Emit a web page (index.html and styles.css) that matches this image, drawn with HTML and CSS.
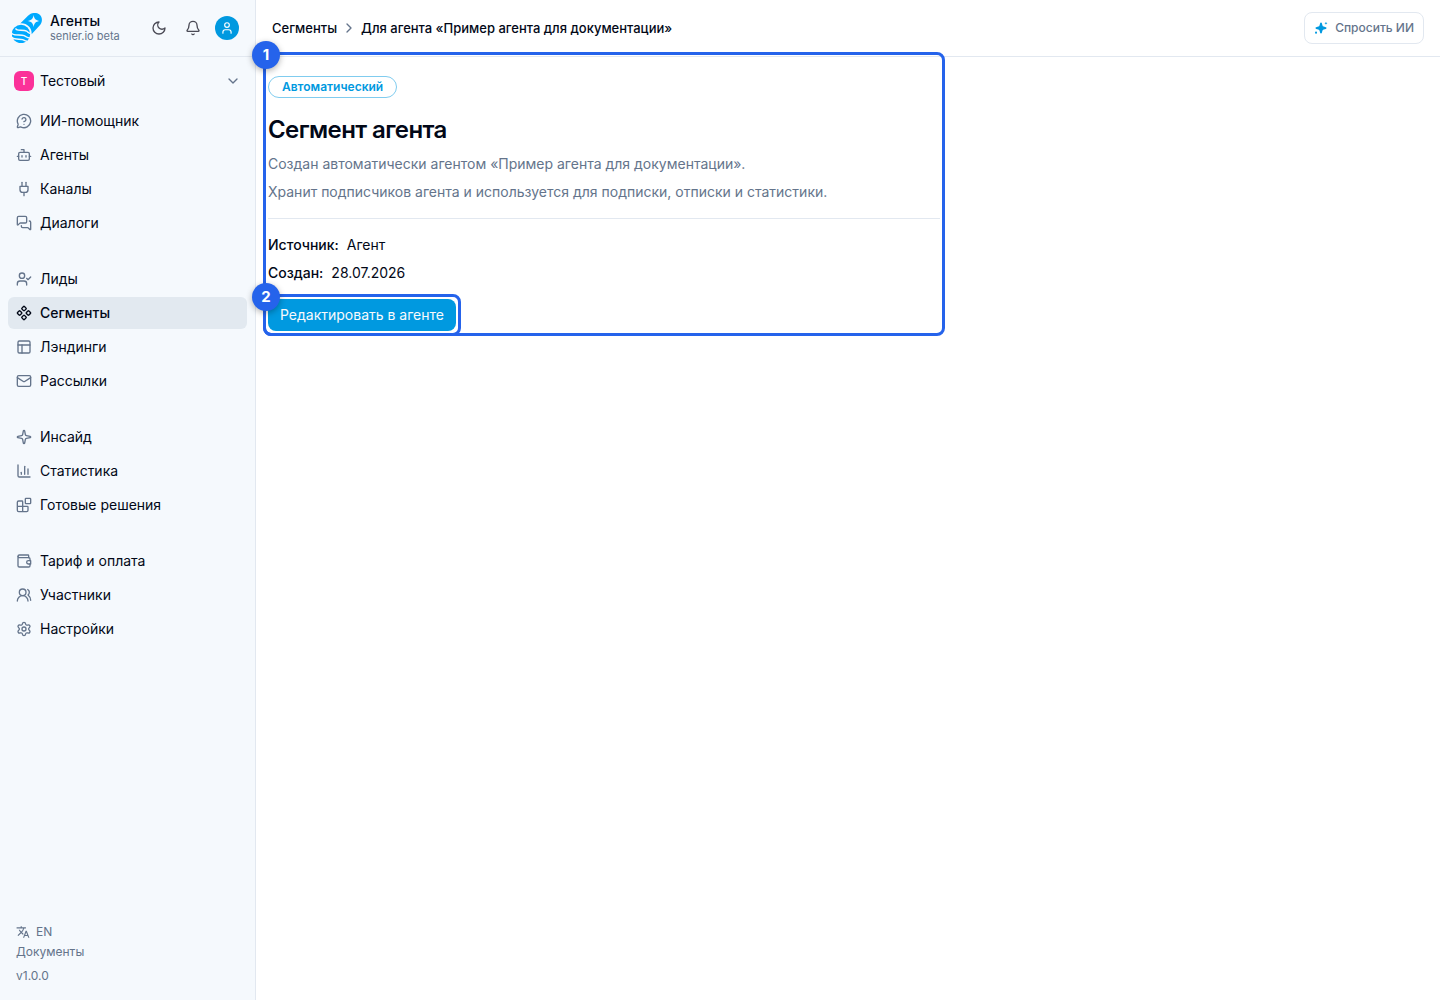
FILE: index.html
```html
<!DOCTYPE html>
<html lang="ru">
<head>
    <meta charset="UTF-8">
    <meta name="viewport" content="width=device-width, initial-scale=1.0">
    <title>Сегмент агента</title>
    <link rel="stylesheet" href="styles.css">
</head>
<body>

<div class="app">
    <aside class="sidebar">
        <div class="brand">
            <svg class="logo" viewBox="0 0 30 30" aria-hidden="true">
                <path fill="#00aaff" d="M8.200 10.400 16 2.700C20-1 25.500-.8 28 2c2.800 3 2.500 7.600-.6 10.800L19.600 21.200c.7-6.200-4.900-11.600-11.400-10.800z"/>
                <path fill="#f5f9fd" d="M21.600 2c.7 4.100 2.100 5.300 6 6-3.900.7-5.300 1.900-6 6-.7-4.100-2.100-5.300-6-6 3.900-.7 5.300-1.900 6-6z"/>
                <circle cx="9" cy="21" r="9.200" fill="#00aaff"/>
                <path fill="none" stroke="#f5f9fd" stroke-width="1.500" d="M4 15.400c-.6 2.800 7.500 1 10.600 2.800 1.500.9 2.200 2.300 4 2.400M-.5 20c1 3.200 9 1.400 12.600 2.600 2.300.8 2.600 2.600 6 2.400M-.2 24.400c3 2.800 8 1.200 10.800 2.200 1.500.6 2 1.400 4.500 1.600"/>
            </svg>
            <div class="brand-text">
                <span class="brand-name">Агенты</span>
                <span class="brand-sub">senler.io beta</span>
            </div>
            <div class="brand-actions">
                <button type="button" class="icon-button" aria-label="Тема">
                    <svg class="icon" viewBox="0 0 24 24"><path d="M12 3a6 6 0 0 0 9 9 9 9 0 1 1-9-9Z"/></svg>
                </button>
                <button type="button" class="icon-button" aria-label="Уведомления">
                    <svg class="icon" viewBox="0 0 24 24"><path d="M10.268 21a2 2 0 0 0 3.464 0"/><path d="M3.262 15.326A1 1 0 0 0 4 17h16a1 1 0 0 0 .74-1.673C19.410 13.956 18 12.499 18 8A6 6 0 0 0 6 8c0 4.499-1.411 5.956-2.738 7.326"/></svg>
                </button>
                <button type="button" class="avatar" aria-label="Профиль">
                    <svg class="icon" viewBox="0 0 24 24"><path d="M19 21v-2a4 4 0 0 0-4-4H9a4 4 0 0 0-4 4v2"/><circle cx="12" cy="7" r="4"/></svg>
                </button>
            </div>
        </div>

        <button type="button" class="workspace">
            <span class="workspace-mark">Т</span>
            <span class="workspace-name">Тестовый</span>
            <svg class="icon" viewBox="0 0 24 24"><path d="m6 9 6 6 6-6"/></svg>
        </button>

        <nav class="nav">
            <div class="nav-group">
                <a class="nav-item" href="#">
                    <svg class="icon" viewBox="0 0 24 24"><path d="M2.992 16.342a2 2 0 0 1 .094 1.167l-1.065 3.290a1 1 0 0 0 1.236 1.168l3.413-.998a2 2 0 0 1 1.099.092 10 10 0 1 0-4.777-4.719"/><path d="M9.090 9a3 3 0 0 1 5.830 1c0 2-3 3-3 3"/><path d="M12 17h.01"/></svg>
                    ИИ-помощник
                </a>
                <a class="nav-item" href="#">
                    <svg class="icon" viewBox="0 0 24 24"><path d="M12 8V4H8"/><rect width="16" height="12" x="4" y="8" rx="2"/><path d="M2 14h2"/><path d="M20 14h2"/><path d="M15 13v2"/><path d="M9 13v2"/></svg>
                    Агенты
                </a>
                <a class="nav-item" href="#">
                    <svg class="icon" viewBox="0 0 24 24"><path d="M12 22v-5"/><path d="M9 8V2"/><path d="M15 8V2"/><path d="M18 8v5a4 4 0 0 1-4 4h-4a4 4 0 0 1-4-4V8Z"/></svg>
                    Каналы
                </a>
                <a class="nav-item" href="#">
                    <svg class="icon" viewBox="0 0 24 24"><path d="M16 10a2 2 0 0 1-2 2H6.828a2 2 0 0 0-1.414.586l-2.202 2.202A.71.71 0 0 1 2 14.286V4a2 2 0 0 1 2-2h10a2 2 0 0 1 2 2z"/><path d="M20 9a2 2 0 0 1 2 2v10.286a.71.71 0 0 1-1.212.502l-2.202-2.202A2 2 0 0 0 17.172 19H10a2 2 0 0 1-2-2v-1"/></svg>
                    Диалоги
                </a>
            </div>
            <div class="nav-group">
                <a class="nav-item" href="#">
                    <svg class="icon" viewBox="0 0 24 24"><path d="m16 11 2 2 4-4"/><path d="M16 21v-2a4 4 0 0 0-4-4H6a4 4 0 0 0-4 4v2"/><circle cx="9" cy="7" r="4"/></svg>
                    Лиды
                </a>
                <a class="nav-item active" href="#" aria-current="page">
                    <svg class="icon" viewBox="0 0 24 24"><path d="M15.536 11.293a1 1 0 0 0 0 1.414l2.376 2.377a1 1 0 0 0 1.414 0l2.377-2.377a1 1 0 0 0 0-1.414l-2.377-2.377a1 1 0 0 0-1.414 0z"/><path d="M2.297 11.293a1 1 0 0 0 0 1.414l2.377 2.377a1 1 0 0 0 1.414 0l2.377-2.377a1 1 0 0 0 0-1.414L6.088 8.916a1 1 0 0 0-1.414 0z"/><path d="M8.916 17.912a1 1 0 0 0 0 1.415l2.377 2.376a1 1 0 0 0 1.414 0l2.377-2.376a1 1 0 0 0 0-1.415l-2.377-2.376a1 1 0 0 0-1.414 0z"/><path d="M8.916 4.674a1 1 0 0 0 0 1.414l2.377 2.376a1 1 0 0 0 1.414 0l2.377-2.376a1 1 0 0 0 0-1.414l-2.377-2.377a1 1 0 0 0-1.414 0z"/></svg>
                    Сегменты
                </a>
                <a class="nav-item" href="#">
                    <svg class="icon" viewBox="0 0 24 24"><rect width="18" height="18" x="3" y="3" rx="2"/><path d="M3 9h18"/><path d="M9 21V9"/></svg>
                    Лэндинги
                </a>
                <a class="nav-item" href="#">
                    <svg class="icon" viewBox="0 0 24 24"><path d="m22 7-8.991 5.727a2 2 0 0 1-2.009 0L2 7"/><rect x="2" y="4" width="20" height="16" rx="2"/></svg>
                    Рассылки
                </a>
            </div>
            <div class="nav-group">
                <a class="nav-item" href="#">
                    <svg class="icon" viewBox="0 0 24 24"><path d="M11.017 2.814a1 1 0 0 1 1.966 0l1.051 5.558a2 2 0 0 0 1.594 1.594l5.558 1.051a1 1 0 0 1 0 1.966l-5.558 1.051a2 2 0 0 0-1.594 1.594l-1.051 5.558a1 1 0 0 1-1.966 0l-1.051-5.558a2 2 0 0 0-1.594-1.594l-5.558-1.051a1 1 0 0 1 0-1.966l5.558-1.051a2 2 0 0 0 1.594-1.594z"/></svg>
                    Инсайд
                </a>
                <a class="nav-item" href="#">
                    <svg class="icon" viewBox="0 0 24 24"><path d="M3 3v16a2 2 0 0 0 2 2h16"/><path d="M18 17V9"/><path d="M13 17V5"/><path d="M8 17v-3"/></svg>
                    Статистика
                </a>
                <a class="nav-item" href="#">
                    <svg class="icon" viewBox="0 0 24 24"><path d="M10 22V7a1 1 0 0 0-1-1H4a2 2 0 0 0-2 2v12a2 2 0 0 0 2 2h12a2 2 0 0 0 2-2v-5a1 1 0 0 0-1-1H2"/><rect x="14" y="2" width="8" height="8" rx="1"/></svg>
                    Готовые решения
                </a>
            </div>
            <div class="nav-group">
                <a class="nav-item" href="#">
                    <svg class="icon" viewBox="0 0 24 24"><path d="M3 5a2 2 0 0 1 2-2h13a1 1 0 0 1 1 1v3"/><path d="M3 5a2 2 0 0 0 2 2h14a2 2 0 0 1 2 2v2.500M21 16.500V19a2 2 0 0 1-2 2H5a2 2 0 0 1-2-2V5"/><path d="M22 11.500h-3.500a2.500 2.500 0 0 0 0 5H22z"/></svg>
                    Тариф и оплата
                </a>
                <a class="nav-item" href="#">
                    <svg class="icon" viewBox="0 0 24 24"><path d="M18 21a8 8 0 0 0-16 0"/><circle cx="10" cy="8" r="5"/><path d="M22 20c0-3.370-2-6.500-4-8a5 5 0 0 0-.45-8.300"/></svg>
                    Участники
                </a>
                <a class="nav-item" href="#">
                    <svg class="icon" viewBox="0 0 24 24"><path d="M9.671 4.136a2.340 2.340 0 0 1 4.659 0 2.340 2.340 0 0 0 3.319 1.915 2.340 2.340 0 0 1 2.330 4.033 2.340 2.340 0 0 0 0 3.831 2.340 2.340 0 0 1-2.330 4.033 2.340 2.340 0 0 0-3.319 1.915 2.340 2.340 0 0 1-4.659 0 2.340 2.340 0 0 0-3.320-1.915 2.340 2.340 0 0 1-2.330-4.033 2.340 2.340 0 0 0 0-3.831A2.340 2.340 0 0 1 6.350 6.051a2.340 2.340 0 0 0 3.319-1.915"/><circle cx="12" cy="12" r="3"/></svg>
                    Настройки
                </a>
            </div>
        </nav>

        <div class="sidebar-footer">
            <button type="button" class="lang">
                <svg viewBox="0 0 24 24" aria-hidden="true"><path d="m12.870 15.070-2.540-2.510.03-.03A17.520 17.520 0 0 0 14.070 6H17V4h-7V2H8v2H1v2h11.170C11.500 7.920 10.440 9.750 9 11.350 8.070 10.320 7.300 9.190 6.690 8h-2c.73 1.630 1.730 3.170 2.980 4.560l-5.090 5.020L4 19l5-5 3.110 3.110zM18.500 10h-2L12 22h2l1.120-3h4.750L21 22h2zm-2.620 7 1.620-4.330L19.120 17z"/></svg>
                EN
            </button>
            <a href="#">Документы</a>
            <span class="version">v1.0.0</span>
        </div>
    </aside>

    <main class="main">
        <header class="topbar">
            <nav class="breadcrumbs">
                <a href="#">Сегменты</a>
                <svg class="icon" viewBox="0 0 24 24"><path d="m9 18 6-6-6-6"/></svg>
                <a href="#">Для агента «Пример агента для документации»</a>
            </nav>
            <button type="button" class="ask-button">
                <svg viewBox="0 0 24 24" aria-hidden="true"><path d="M12 2.500c.9 0 1.300.5 1.500 1.300l.9 3.500c.3 1.300 1 2 2.300 2.300l3.500.9c.8.2 1.300.6 1.300 1.500s-.5 1.300-1.300 1.500l-3.500.9c-1.300.3-2 1-2.300 2.300l-.9 3.500c-.2.8-.6 1.300-1.500 1.300s-1.300-.5-1.500-1.300l-.9-3.500c-.3-1.300-1-2-2.300-2.300l-3.500-.9C3 13.300 2.500 12.900 2.500 12s.5-1.300 1.300-1.500l3.500-.9c1.300-.3 2-1 2.300-2.300l.9-3.500c.2-.8.6-1.300 1.500-1.300z"/><path d="m20.500 1.500.8 1.700 1.700.8-1.700.8-.8 1.700-.8-1.700L18 4l1.700-.8z"/><circle cx="3.500" cy="20" r="1.800"/></svg>
                Спросить ИИ
            </button>
        </header>

        <section class="segment marked">
            <span class="mark">1</span>
            <span class="badge">Автоматический</span>
            <div class="segment-head">
                <h1>Сегмент агента</h1>
                <p>Создан автоматически агентом «Пример агента для документации».</p>
                <p>Хранит подписчиков агента и используется для подписки, отписки и статистики.</p>
            </div>
            <dl class="details">
                <div>
                    <dt>Источник:</dt>
                    <dd>Агент</dd>
                </div>
                <div>
                    <dt>Создан:</dt>
                    <dd>28.07.2026</dd>
                </div>
            </dl>
            <div class="marked">
                <span class="mark">2</span>
                <button type="button" class="edit-button">Редактировать в агенте</button>
            </div>
        </section>
    </main>
</div>

</body>
</html>
```
FILE: styles.css
```css
* {
    box-sizing: border-box;
}

body {
    margin: 0;
    font-family: Inter, "Liberation Sans", sans-serif;
    font-size: 14px;
    line-height: 20px;
    color: #020817;
    background: #fff;
}

a {
    color: inherit;
    text-decoration: none;
}

button {
    padding: 0;
    border: none;
    background: none;
    font: inherit;
    color: inherit;
    cursor: pointer;
}

.icon {
    width: 16px;
    height: 16px;
    flex-shrink: 0;
    fill: none;
    stroke: currentColor;
    stroke-width: 2;
    stroke-linecap: round;
    stroke-linejoin: round;
}

.app {
    display: flex;
    min-height: 100vh;
}

/* sidebar */
.sidebar {
    display: flex;
    flex-direction: column;
    width: 256px;
    flex-shrink: 0;
    background: #f5f9fd;
    border-right: 1px solid #e2e8f0;
}

.brand {
    display: flex;
    align-items: center;
    gap: 8px;
    height: 57px;
    padding: 0 16px 0 12px;
    border-bottom: 1px solid #e2e8f0;
}

.logo {
    width: 30px;
    height: 30px;
}

.brand-text {
    display: flex;
    flex-direction: column;
}

.brand-name {
    font-weight: 500;
    line-height: 16px;
}

.brand-sub {
    font-size: 11px;
    line-height: 14px;
    color: #64748b;
}

.brand-actions {
    display: flex;
    align-items: center;
    gap: 10px;
    margin-left: auto;
}

.icon-button,
.avatar {
    display: flex;
    align-items: center;
    justify-content: center;
    width: 24px;
    height: 24px;
}

.icon-button {
    color: #4a4a55;
}

.avatar {
    border-radius: 50%;
    background: #0099e0;
    color: #fff;
}

.avatar .icon {
    width: 14px;
    height: 14px;
}

.workspace {
    display: flex;
    align-items: center;
    gap: 6px;
    height: 32px;
    margin: 8px 8px 0;
    padding: 0 6px;
    text-align: left;
}

.workspace-mark {
    width: 20px;
    height: 20px;
    border-radius: 6px;
    background: #fb3199;
    color: #fff;
    font-size: 10px;
    font-weight: 500;
    text-align: center;
}

.workspace-name {
    flex: 1;
}

.workspace .icon {
    color: #64748b;
}

.nav {
    display: flex;
    flex-direction: column;
    gap: 24px;
    padding: 8px;
}

.nav-group {
    display: flex;
    flex-direction: column;
    gap: 2px;
}

.nav-item {
    display: flex;
    align-items: center;
    gap: 8px;
    height: 32px;
    padding: 0 8px;
    border-radius: 6px;
}

.nav-item .icon {
    color: #64748b;
}

.nav-item.active {
    background: #e2e9f0;
    font-weight: 500;
}

.nav-item.active .icon {
    color: #020817;
}

.sidebar-footer {
    display: flex;
    flex-direction: column;
    align-items: flex-start;
    margin-top: auto;
    padding: 0 16px 14px;
    font-size: 12px;
    color: #64748b;
}

.lang {
    display: flex;
    align-items: center;
    gap: 6px;
}

.lang svg {
    width: 14px;
    height: 14px;
    fill: currentColor;
}

.version {
    margin-top: 4px;
}

/* content */
.main {
    flex: 1;
    min-width: 0;
}

.topbar {
    display: flex;
    align-items: center;
    justify-content: space-between;
    height: 57px;
    padding: 0 16px;
    border-bottom: 1px solid #e2e8f0;
}

.breadcrumbs {
    display: flex;
    align-items: center;
    gap: 4px;
    font-size: 13px;
    font-weight: 500;
}

.breadcrumbs .icon {
    color: #64748b;
}

.ask-button {
    display: flex;
    align-items: center;
    gap: 7px;
    height: 32px;
    padding: 0 9px;
    border: 1px solid #e2e8f0;
    border-radius: 8px;
    font-size: 12px;
    font-weight: 500;
    color: #64748b;
}

.ask-button svg {
    width: 14px;
    height: 14px;
    fill: #0099e0;
}

.segment {
    display: flex;
    flex-direction: column;
    align-items: flex-start;
    max-width: 672px;
    margin: 0 12px;
    padding-top: 19px;
}

.badge {
    padding: 0 13px;
    border: 1px solid #80ccef;
    border-radius: 11px;
    font-size: 12px;
    font-weight: 600;
    color: #0099e0;
}

.segment-head {
    align-self: stretch;
    padding: 16px 0 12px;
    border-bottom: 1px solid #e2e8f0;
    line-height: 28px;
    color: #64748b;
}

.segment-head h1 {
    margin: 0 0 4px;
    font-size: 24px;
    font-weight: 600;
    line-height: 32px;
    letter-spacing: -0.025em;
    color: #020817;
}

.segment-head p {
    margin: 0;
}

.details {
    margin: 12px 0;
    line-height: 28px;
}

.details div {
    display: flex;
    gap: 8px;
}

.details dt {
    font-weight: 500;
}

.details dd {
    margin: 0;
}

.edit-button {
    display: block;
    height: 32px;
    padding: 0 12px;
    border-radius: 8px;
    background: #0099e0;
    color: #f8fafc;
}

/* numbered frames around blocks */
.marked {
    position: relative;
}

.marked::after {
    content: "";
    position: absolute;
    inset: -5px;
    border: 3px solid #2563eb;
    border-radius: 8px;
    pointer-events: none;
}

.mark {
    position: absolute;
    top: -16px;
    left: -16px;
    z-index: 1;
    width: 28px;
    height: 28px;
    border-radius: 50%;
    background: #2563eb;
    box-shadow: 0 2px 6px rgba(0, 0, 0, 0.3);
    color: #fff;
    font-size: 15px;
    font-weight: 700;
    line-height: 28px;
    text-align: center;
}
```
